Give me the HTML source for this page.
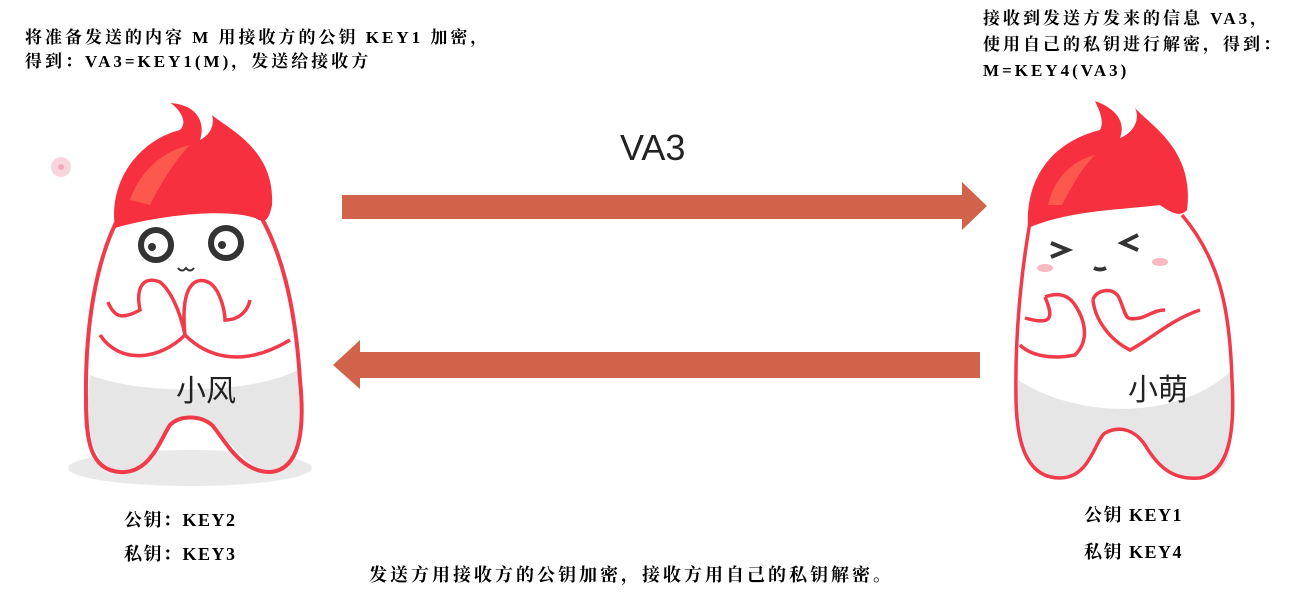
<!DOCTYPE html>
<html><head><meta charset="utf-8"><style>
html,body{margin:0;padding:0;background:#fff;width:1291px;height:603px;overflow:hidden;position:relative}
.t{position:absolute;font-family:"Liberation Serif","Noto Serif CJK SC",serif;font-weight:bold;color:#000;white-space:nowrap}
.a{font-size:17px;letter-spacing:3px;line-height:24px}
.b{font-size:17px;letter-spacing:3px;line-height:26px}
.c{font-size:18px;letter-spacing:1.5px}
.d{font-size:18px;letter-spacing:3px}
</style></head><body>
<svg width="1291" height="603" style="position:absolute;left:0;top:0">
<polygon points="342,195 962,195 962,182 987,206 962,230 962,219 342,219" fill="#d0634a"/>
<polygon points="980,352 360,352 360,340 333,365 360,389 360,378 980,378" fill="#d0634a"/>
<text x="620" y="160" font-family="Liberation Sans,sans-serif" font-size="36" fill="#222">VA3</text>

<!-- left char -->
<ellipse cx="190" cy="468" rx="122" ry="18" fill="#e9e9e9"/>
<path d="M120,215 C95,260 85,330 86,400 C86,440 90,470 120,472 C150,474 160,440 170,425 C180,415 200,415 212,425 C225,440 240,472 270,472 C300,470 305,430 300,380 C295,300 280,250 260,215 Z" fill="#fff"/>
<path d="M90,375 C140,395 250,395 298,370 L300,420 C300,460 295,470 270,470 C245,470 230,440 212,425 C200,415 180,415 170,425 C158,440 150,472 120,470 C92,468 88,430 88,400 Z" fill="#e6e6e6"/>
<path d="M120,215 C95,260 85,330 86,400 C86,440 90,470 120,472 C150,474 160,440 170,425 C180,415 200,415 212,425 C225,440 240,472 270,472 C300,470 305,430 300,380 C295,300 280,250 260,215" fill="none" stroke="#f23b4a" stroke-width="4"/>
<path d="M115,228 C108,180 140,140 180,130 C190,120 175,105 170,103 C200,105 205,125 200,140 C210,135 215,125 212,115 C230,130 275,150 272,205 C268,225 262,222 255,218 C225,208 160,215 115,228 Z" fill="#f7303f"/>
<path d="M130,200 C140,170 165,150 190,145 C175,160 160,185 150,205 Z" fill="#ff6a55" opacity=".7"/>
<circle cx="156" cy="245" r="15" fill="none" stroke="#333" stroke-width="6"/>
<circle cx="226" cy="243" r="15" fill="none" stroke="#333" stroke-width="6"/>
<circle cx="152" cy="247" r="4" fill="#333"/><circle cx="222" cy="245" r="4" fill="#333"/>
<path d="M178,268 q4,5 8,0 q4,5 8,0" fill="none" stroke="#333" stroke-width="2"/>
<path d="M108,302 C115,320 125,318 140,310 C135,285 145,276 160,282 C170,290 180,310 185,335 C180,285 195,275 210,283 C222,292 225,315 225,320 C240,320 248,310 250,300 M100,335 C120,365 160,360 185,335 C205,355 240,370 290,340" fill="none" stroke="#f23b4a" stroke-width="3.5"/>
<circle cx="61" cy="167" r="10" fill="#f8d5dc"/><circle cx="61" cy="167" r="3" fill="#f2aabb"/>
<text x="176" y="401" font-family="Noto Sans CJK SC,sans-serif" font-size="30" fill="#222">小风</text>

<!-- right char -->
<path d="M1030,222 C1020,280 1015,340 1016,400 C1017,450 1030,478 1060,478 C1090,478 1095,440 1105,433 C1120,425 1135,430 1145,445 C1160,470 1175,480 1200,478 C1230,472 1235,430 1232,380 C1230,310 1220,260 1182,215 Z" fill="#fff"/>
<path d="M1018,380 C1080,420 1180,420 1232,370 L1232,420 C1232,460 1225,478 1200,478 C1175,480 1160,470 1145,445 C1135,430 1120,425 1105,433 C1095,440 1090,478 1060,478 C1030,478 1017,450 1017,410 Z" fill="#e6e6e6"/>
<path d="M1030,222 C1020,280 1015,340 1016,400 C1017,450 1030,478 1060,478 C1090,478 1095,440 1105,433 C1120,425 1135,430 1145,445 C1160,470 1175,480 1200,478 C1230,472 1235,430 1232,380 C1230,310 1220,260 1182,215" fill="none" stroke="#f23b4a" stroke-width="3.5"/>
<path d="M1028,228 C1025,170 1060,140 1100,130 C1105,120 1098,108 1095,101 C1120,110 1125,125 1120,138 C1135,132 1140,118 1135,108 C1150,125 1195,150 1187,210 C1180,218 1170,212 1160,205 C1120,210 1070,210 1028,228 Z" fill="#f7303f"/>
<path d="M1048,205 C1055,175 1075,160 1095,155 C1080,170 1070,190 1062,205 Z" fill="#ff6a55" opacity=".7"/>
<path d="M1051,243 L1068,250 L1051,257" fill="none" stroke="#333" stroke-width="4"/>
<path d="M1138,235 L1122,243 L1138,250" fill="none" stroke="#333" stroke-width="4"/>
<path d="M1094,268 q6,3 12,0" fill="none" stroke="#333" stroke-width="4"/>
<ellipse cx="1045" cy="268" rx="8" ry="4" fill="#f8b8c4"/><ellipse cx="1160" cy="262" rx="8" ry="4" fill="#f8b8c4"/>
<path d="M1045,297 C1055,320 1050,325 1025,318 M1020,345 C1030,355 1050,360 1075,355 C1090,340 1085,320 1075,305 C1065,290 1050,295 1045,297 M1093,300 C1095,290 1115,285 1120,300 C1128,320 1125,320 1140,318 C1150,315 1155,310 1165,310 M1093,300 C1095,320 1110,340 1130,350 C1150,340 1170,320 1200,310" fill="none" stroke="#f23b4a" stroke-width="3.5"/>
<text x="1128" y="400" font-family="Noto Sans CJK SC,sans-serif" font-size="30" fill="#222">小萌</text>
</svg>

<div class="t a" style="left:25px;top:26px">将准备发送的内容 M 用接收方的公钥 KEY1 加密，<br>得到：VA3=KEY1(M)，发送给接收方</div>
<div class="t b" style="left:983px;top:6px">接收到发送方发来的信息 VA3，<br>使用自己的私钥进行解密，得到：<br>M=KEY4(VA3)</div>
<div class="t c" style="left:124px;top:506px">公钥：KEY2</div>
<div class="t c" style="left:124px;top:540px">私钥：KEY3</div>
<div class="t c" style="left:1084px;top:501px">公钥 KEY1</div>
<div class="t c" style="left:1084px;top:538px">私钥 KEY4</div>
<div class="t d" style="left:369px;top:561px">发送方用接收方的公钥加密，接收方用自己的私钥解密。</div>
</body></html>
